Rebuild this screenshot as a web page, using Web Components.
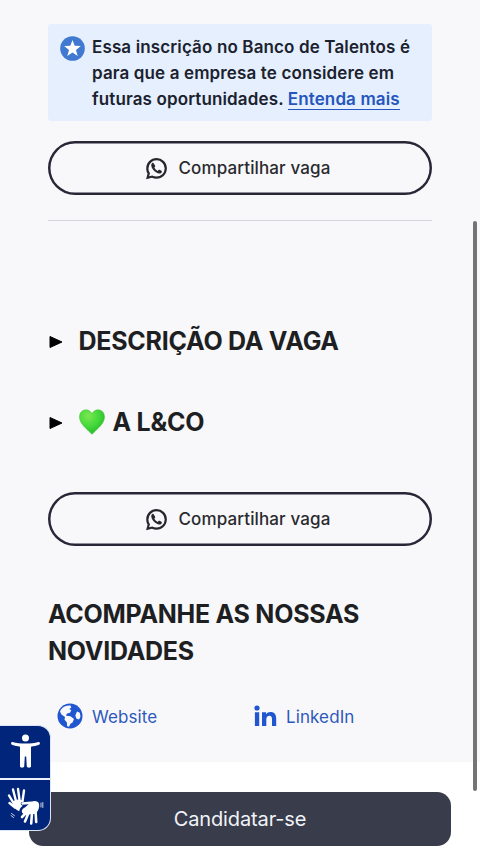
<!DOCTYPE html>
<html lang="pt-BR">
<head>
<meta charset="utf-8">
<title>Banco de Talentos</title>
<style>
html, body { margin: 0; height: 854px; overflow: hidden; }
body { font-family: Inter, "Liberation Sans", sans-serif; color: #1e1f23; background: #fff; }
</style>
</head>
<body>
<job-page></job-page>
<script>
const define = (name, html) => {
  const t = document.createElement('template');
  t.innerHTML = html;
  customElements.define(name, class extends HTMLElement {
    constructor() {
      super();
      this.attachShadow({ mode: 'open' }).append(t.content.cloneNode(true));
    }
  });
};

define('talent-notice', `
<style>
:host { display: flex; box-sizing: border-box; height: 97px; padding: 10px 12px; gap: 7px; background: #e5effe; border-radius: 4px; }
svg { flex: none; width: 25px; height: 25px; margin-top: 2px; }
p { margin: 0; font-size: 17px; line-height: 26px; font-weight: 600; letter-spacing: .13px; color: #1b222e; white-space: nowrap; }
::slotted(a) { color: #2456bd; text-decoration: none; border-bottom: 1px solid #2456bd; }
</style>
<svg viewBox="0 0 25 25"><circle cx="12.5" cy="12.5" r="12.3" fill="#4079cf"/><path fill="#fff" d="M12.5 4l2.2 5.8 6.1.3-4.8 3.8 1.7 6-5.2-3.4-5.2 3.4 1.7-6-4.8-3.8 6.1-.3z"/></svg>
<p><slot></slot></p>`);

define('share-button', `
<style>
:host { display: block; }
button { display: flex; width: 100%; height: 54px; box-sizing: border-box; align-items: center; justify-content: center; gap: 10px; padding: 0 6px 0 0; border: 0; box-shadow: inset 0 0 0 2.5px #292638; border-radius: 27px; background: none; font: 500 17px Inter, "Liberation Sans", sans-serif; letter-spacing: .12px; color: #2a2a2f; }
svg { width: 25px; height: 25px; }
</style>
<button><svg viewBox="0 0 24 24" fill="#26262b"><path d="M19.05 4.91A9.82 9.82 0 0 0 12.04 2C6.58 2 2.13 6.45 2.13 11.91c0 1.75.46 3.45 1.32 4.95L2 22.2l5.6-1.4a9.9 9.9 0 0 0 4.44 1.02c5.46 0 9.91-4.45 9.91-9.91 0-2.65-1.03-5.14-2.9-7zm-7.01 14.8c-1.5 0-2.9-.4-4.1-1.1l-3.1.9.9-2.9a7.9 7.9 0 0 1-1.5-4.7 7.8 7.8 0 1 1 7.8 7.8z"/><path d="M9.2 7c-.3-.5-.8-.5-1.2-.2-.7.6-1.1 1.4-1 2.4.3 3.5 4.200 7.400 7.600 7.600 1.100.1 2-.4 2.400-1.300.3-.6.2-1-.3-1.300l-1.700-.9c-.4-.2-.7-.1-1 .2l-.8.9c-1.500-.7-2.700-1.900-3.300-3.300l.7-.8c.2-.3.3-.6.1-.9z"/></svg><span><slot></slot></span></button>`);

define('job-section', `
<style>
:host { display: flex; align-items: center; height: 40px; }
.mark { width: 14px; height: 14px; margin: 2px 15.5px 0 1px; }
h2 { margin: 0; display: flex; align-items: center; font-size: 25px; line-height: 37px; font-weight: 700; letter-spacing: -.26px; white-space: nowrap; }
</style>
<svg class="mark" viewBox="0 0 14 14"><path d="M1 1.500L13 7 1 12.500z" stroke="#000" stroke-linejoin="round"/></svg>
<h2><slot></slot></h2>`);

define('green-heart', `
<style>:host { display: block; width: 26px; height: 26px; margin-right: 8px; } svg { display: block; }</style>
<svg width="26" height="26" viewBox="0 0 26 26" role="img"><defs><radialGradient id="g" cx=".35" cy=".25" r=".8"><stop offset="0" stop-color="#7be84f"/><stop offset=".55" stop-color="#42d83b"/><stop offset="1" stop-color="#25b529"/></radialGradient></defs><path fill="url(#g)" stroke="#42bd32" stroke-width=".5" d="M13 4.600C11.200 1.800 9.200.8 7 .8 3.200.8.500 3.800.500 8c0 7 8 12.500 12.500 17.300C17.500 20.500 25.500 15 25.500 8c0-4.200-2.700-7.200-6.500-7.200-2.200 0-4.200 1-6 3.800z"/></svg>`);

define('social-link', `
<style>
:host { display: flex; align-items: center; height: 26px; font-size: 17px; letter-spacing: .1px; color: #2e58bd; }
a { display: flex; align-items: center; gap: 9px; }
span { padding-top: 1px; }
::slotted(svg) { flex: none; }
</style>
<a><slot name="icon"></slot><span><slot></slot></span></a>`);

define('access-tools', `
<style>
:host { display: block; position: absolute; left: 0; top: 725px; width: 51px; height: 106px; box-sizing: border-box; border: 1px solid #dbe5f7; border-left: 0; border-radius: 0 13px 13px 0; background: #00257b; overflow: hidden; }
div { display: grid; place-items: center; height: 52px; }
div + div { border-top: 2px solid #eef3fb; height: 50px; }
svg { display: block; fill: #fff; }
</style>
<div><svg width="50" height="52" viewBox="0 0 50 52"><circle cx="25.500" cy="12" r="3.500"/><path d="M12.500 16c4 1.200 8 1.500 13 1.500s9-.3 13-1.500c1.500-.3 2 2.200.5 2.800-2.900 1-5.500 1.500-8 1.900V40.500c0 1.500-4 1.500-4.200 0l-.6-10h-1.400l-.6 10c-.2 1.500-4.200 1.500-4.200 0V20.700c-2.500-.4-5.100-.9-8-1.900-1.500-.6-1-3.100.5-2.800z"/></svg></div>
<div><svg width="50" height="50" viewBox="0 0 50 50"><g fill="none" stroke="#fff" stroke-linecap="round" stroke-linejoin="round"><path stroke-width="2.400" d="M13.500 23L9 15.500M16 21L13 9.500M19.500 20L18 9M22.500 21L24 10.500M15 27.500L9.500 23"/><path stroke-width="2.600" d="M27 32L22 37M28.500 33l-3.500 8.500M32 33l-.8 10.500M35.500 30l.7 12"/><path stroke-width="2.400" d="M31 22.800L22.500 23.500"/><path stroke-width=".8" d="M41 23v4M42.800 22.500v5M11.500 33.500l3 2.200M11 35.500l2.500 2"/></g><path d="M13 21l5-1.500 5.500 1-.3 1.200c-2.200 0-3.200 2-1.700 3.400l1.200.6c-2 1.500-3.200 3.200-3.500 5.500C16.500 30 14.500 28 13 26z"/><path d="M25.500 27L31 22c3.500-1.800 7.300-1 8 1.800.8 4-1.200 7.700-3.500 10l-7.500.7-4.500-.5c-2.500-2-2.500-4.500 2-7z"/></svg></div>`);

define('apply-bar', `
<style>
:host { display: block; box-sizing: border-box; height: 92px; padding: 30px 29px 8px; background: #fff; }
button { display: block; width: 100%; height: 54px; border: 0; padding: 0; border-radius: 14px; background: #383c4b; color: #f1f3f9; font: 400 20px Inter, "Liberation Sans", sans-serif; letter-spacing: -.12px; }
</style>
<button><slot></slot></button>`);

define('scroll-thumb', `<style>:host { position: absolute; left: 473px; top: 221px; width: 4px; height: 570px; border-radius: 2px; background: #747477; }</style>`);

define('job-page', `
<style>
:host { display: block; position: relative; width: 480px; height: 854px; overflow: hidden; }
main { display: flow-root; box-sizing: border-box; height: 762px; padding: 24px 48px 0; background: #f8f8fa; }
.s1 { margin-top: 20px; }
hr { margin: 25px 0 0; border: 0; height: 1px; background: #d5d6dd; }
.d1 { margin-top: 100px; }
.d2 { margin-top: 41px; }
.s2 { margin-top: 50px; }
.news { margin: 50px 0 0; font-size: 25px; line-height: 37px; font-weight: 700; letter-spacing: -.27px; white-space: nowrap; }
nav { display: grid; grid-template-columns: 197px 1fr; margin-top: 33px; padding-left: 9px; }
</style>
<main>
<talent-notice>Essa inscrição no Banco de Talentos é<br>para que a empresa te considere em<br>futuras oportunidades. <a>Entenda mais</a></talent-notice>
<share-button class="s1">Compartilhar vaga</share-button>
<hr>
<job-section class="d1">DESCRIÇÃO DA VAGA</job-section>
<job-section class="d2"><green-heart></green-heart>A L&amp;CO</job-section>
<share-button class="s2">Compartilhar vaga</share-button>
<h2 class="news">ACOMPANHE AS NOSSAS<br>NOVIDADES</h2>
<nav>
<social-link><svg slot="icon" width="26" height="26" viewBox="0 0 26 26"><circle cx="13" cy="13" r="12.500" fill="#2056cf"/><path fill="#f8f8fa" d="M4 6.500C6 3.500 9.500 2.200 13.500 2.500l.8 2-2 1.500 2 1.200-1.300 2.600-3 .8-1 2.200 4.500.5 3.500 2.700-1.500 3.500-2 1.200-1.500 3-1.800-.5-.4-4-2.300-2.500.5-2.700-3.500-2.500L3 8.500zM20 8.500l2.800 1.200.7 4-1.500 2.800-2.700-1-1-3z"/></svg>Website</social-link>
<social-link><svg slot="icon" width="23" height="22" viewBox="0 0 23 22" fill="#2056cf"><circle cx="3" cy="3" r="2.600"/><path d="M.9 7.300h4.300V21H.9zM8 7.300h4v1.900c1-1.500 2.500-2.200 4.500-2.200 4 0 5.700 2.500 5.700 6.700V21H18v-6.700c0-2.200-.7-3.500-2.500-3.500-2.200 0-3.200 1.500-3.200 3.800V21H8z"/></svg>LinkedIn</social-link>
</nav>
</main>
<apply-bar>Candidatar-se</apply-bar>
<access-tools></access-tools>
<scroll-thumb></scroll-thumb>`);
</script>
</body>
</html>
